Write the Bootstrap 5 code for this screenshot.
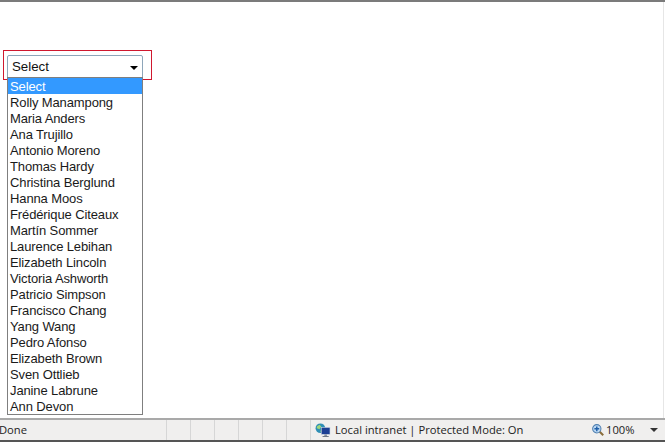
<!DOCTYPE html>
<html lang="en">
<head>
<meta charset="utf-8">
<title>Select</title>
<link rel="stylesheet" href="https://cdn.jsdelivr.net/npm/bootstrap@5.3.0/dist/css/bootstrap.min.css">
<style>
html,body{height:442px;overflow:hidden;background:#fff}
.shell{height:442px;border-top:2px solid #7b7b7b}
.page-area{padding:48px 0 0 3px;min-height:0;margin-right:1px;border-right:1px solid #e6e6e6}
.red-frame{width:149px;height:30px;border:1px solid #d0182f;padding:4px 0 0 3px}
.combo{width:136px;height:24px;border:1px solid #8ea6ba;border-radius:2px;padding:0 4px 0 4px;font:13.3px/20px "Liberation Sans",Arial,sans-serif;color:#111;background:#fff}
.combo-arrow{width:0;height:0;border-left:4px solid transparent;border-right:4px solid transparent;border-top:4px solid #000;margin-top:1px}
.drop-wrap{margin-left:4px;width:136px;margin-top:-3px;border:1px solid #7f7f7f;background:#fff;font:13px/18px "Liberation Sans",Arial,sans-serif;letter-spacing:-.12px;color:#1a1a1a;position:relative}
.drop-row{padding-left:2px;height:16px;white-space:nowrap}
.drop-row.sel{background:#3399ff;color:#fff}
.status{height:24px;background:#f0efee;border-top:2px solid #a9a9a9;border-bottom:2px solid #555;font:11.2px/20px "Open Sans",sans-serif;color:#222}
.cell-done{width:167px;margin-left:-1px;flex:none}
.cell-x{width:24px;border-left:1px solid #d6d6d6;flex:none}
.cell-zone{width:277px;border-left:1px solid #d6d6d6;padding-left:4px;gap:4px;flex:none}
.cell-zoom{gap:2px;padding-left:5px;width:78px;flex:none}
.zoom-caret{width:0;height:0;border-left:4px solid transparent;border-right:4px solid transparent;border-top:4px solid #333;margin-left:14px}
</style>
</head>
<body class="m-0">
<div class="shell d-flex flex-column">
  <div class="page-area flex-grow-1">
    <div class="red-frame"><div class="combo d-flex align-items-center justify-content-between"><span>Select</span><span class="combo-arrow"></span></div></div>
    <div class="drop-wrap">
      <div class="drop-row sel">Select</div>
      <div class="drop-row">Rolly Manampong</div>
      <div class="drop-row">Maria Anders</div>
      <div class="drop-row">Ana Trujillo</div>
      <div class="drop-row">Antonio Moreno</div>
      <div class="drop-row">Thomas Hardy</div>
      <div class="drop-row">Christina Berglund</div>
      <div class="drop-row">Hanna Moos</div>
      <div class="drop-row">Frédérique Citeaux</div>
      <div class="drop-row">Martín Sommer</div>
      <div class="drop-row">Laurence Lebihan</div>
      <div class="drop-row">Elizabeth Lincoln</div>
      <div class="drop-row">Victoria Ashworth</div>
      <div class="drop-row">Patricio Simpson</div>
      <div class="drop-row">Francisco Chang</div>
      <div class="drop-row">Yang Wang</div>
      <div class="drop-row">Pedro Afonso</div>
      <div class="drop-row">Elizabeth Brown</div>
      <div class="drop-row">Sven Ottlieb</div>
      <div class="drop-row">Janine Labrune</div>
      <div class="drop-row">Ann Devon</div>
    </div>
  </div>
  <div class="status d-flex">
    <div class="cell-done">Done</div>
    <div class="cell-x"></div><div class="cell-x"></div><div class="cell-x"></div><div class="cell-x"></div><div class="cell-x"></div><div class="cell-x"></div>
    <div class="cell-zone d-flex align-items-center">
      <svg width="16" height="14" viewBox="0 0 18 16"><circle cx="6" cy="6" r="5.500" fill="#2f8fb5"/><path d="M2 4l3-2 2 2-2 3-3-1zM7 7l2 1-1 3-2-1z" fill="#9fd67a"/><rect x="7" y="5" width="10" height="8" fill="#1c3f94" stroke="#cfd8e6" stroke-width=".7"/><rect x="10.500" y="13" width="3" height="2" fill="#8a93a3"/><rect x="8.500" y="15" width="7" height="1" fill="#5e6878"/></svg>
      <span>Local intranet | Protected Mode: On</span>
    </div>
    <div class="cell-zoom d-flex align-items-center">
      <svg width="12" height="12" viewBox="0 0 15 15"><path d="M9 9l5 5" stroke="#8a6d3b" stroke-width="2.500"/><circle cx="6" cy="6" r="5.200" fill="#bcd8f2" stroke="#4f7fb0" stroke-width="1.300"/><path d="M3 6h6M6 3v6" stroke="#1f5fa8" stroke-width="1.800"/></svg>
      <span>100%</span><span class="zoom-caret"></span>
    </div>
  </div>
</div>
</body>
</html>
